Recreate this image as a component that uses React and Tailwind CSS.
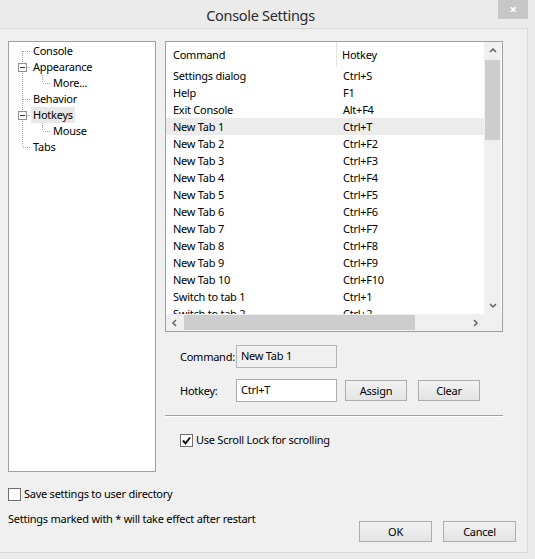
import React from "react";

const rows = [
  ["Settings dialog", "Ctrl+S"],
  ["Help", "F1"],
  ["Exit Console", "Alt+F4"],
  ["New Tab 1", "Ctrl+T"],
  ["New Tab 2", "Ctrl+F2"],
  ["New Tab 3", "Ctrl+F3"],
  ["New Tab 4", "Ctrl+F4"],
  ["New Tab 5", "Ctrl+F5"],
  ["New Tab 6", "Ctrl+F6"],
  ["New Tab 7", "Ctrl+F7"],
  ["New Tab 8", "Ctrl+F8"],
  ["New Tab 9", "Ctrl+F9"],
  ["New Tab 10", "Ctrl+F10"],
  ["Switch to tab 1", "Ctrl+1"],
  ["Switch to tab 2", "Ctrl+2"],
];

const DOT = "#a0a0a0";

function Gutter({ level, kind, box }) {
  const w = level === 0 ? 22 : 42;
  return (
    <svg width={w} height="16" className="shrink-0" shapeRendering="crispEdges">
      {level === 0 && (
        <>
          {kind === "first" && <line x1="13.5" y1="8" x2="13.5" y2="16" stroke={DOT} strokeDasharray="1 1" />}
          {kind === "mid" && <line x1="13.5" y1="0" x2="13.5" y2="16" stroke={DOT} strokeDasharray="1 1" />}
          {kind === "last" && <line x1="13.5" y1="0" x2="13.5" y2="8" stroke={DOT} strokeDasharray="1 1" />}
          <line x1={box ? 18 : 14} y1="8.5" x2="22" y2="8.5" stroke={DOT} strokeDasharray="1 1" />
          {box && (
            <>
              <rect x="9.5" y="4.5" width="8" height="8" fill="#fff" stroke="#919191" />
              <line x1="11" y1="8.5" x2="16" y2="8.5" stroke="#333" />
            </>
          )}
        </>
      )}
      {level === 1 && (
        <>
          <line x1="13.5" y1="0" x2="13.5" y2="16" stroke={DOT} strokeDasharray="1 1" />
          <line x1="33.5" y1="0" x2="33.5" y2="8" stroke={DOT} strokeDasharray="1 1" />
          <line x1="34" y1="8.5" x2="41" y2="8.5" stroke={DOT} strokeDasharray="1 1" />
        </>
      )}
    </svg>
  );
}

function TreeRow({ level, kind, box, label, selected }) {
  return (
    <div className="flex h-[16px] items-center">
      <Gutter level={level} kind={kind} box={box} />
      <span className={"px-[2px] leading-[16px] " + (selected ? "bg-[#e8e8e8]" : "")}>{label}</span>
    </div>
  );
}

function Check({ checked }) {
  return (
    <svg width="13" height="13" className="shrink-0" shapeRendering="crispEdges">
      <rect x="0.5" y="0.5" width="12" height="12" fill="#fff" stroke="#707070" />
      {checked && (
        <path d="M3 6.5 L5.5 9.5 L10 3.5" fill="none" stroke="#111" strokeWidth="2" shapeRendering="geometricPrecision" />
      )}
    </svg>
  );
}

function Btn({ children, className = "" }) {
  return (
    <div
      className={
        "flex items-center justify-center border border-[#acacac] bg-gradient-to-b from-[#f2f2f2] to-[#e4e4e4] " +
        className
      }
    >
      {children}
    </div>
  );
}

function Chevron({ dir }) {
  const paths = {
    up: "M1 5 L4 2 L7 5",
    down: "M1 2 L4 5 L7 2",
    left: "M5 1 L2 4 L5 7",
    right: "M2 1 L5 4 L2 7",
  };
  return (
    <svg width="8" height="8">
      <path d={paths[dir]} fill="none" stroke="#606060" strokeWidth="1.5" />
    </svg>
  );
}

export default function App() {
  return (
    <div
      className="w-[535px] h-[559px] bg-[#ebebeb] text-[11px] leading-[16px] tracking-[-0.25px] text-black overflow-hidden"
      style={{ fontFamily: '"Noto Sans", "Open Sans", sans-serif' }}
    >
      {/* Title bar */}
      <div className="relative flex h-[28px] items-center justify-center">
        <span className="text-[14.5px] tracking-[-0.3px] text-[#2b2b2b] mt-[1px] ml-[-14px]">Console Settings</span>
        <div className="absolute right-[7px] top-0 flex h-[19px] w-[30px] items-center justify-center bg-[#c7c7c7] text-white text-[13px] font-bold leading-none">
          ×
        </div>
      </div>

      {/* Client area */}
      <div className="w-[528px] h-[525px] bg-[#f0f0f0] border-t border-r border-b border-[#d8d8d8] flex flex-col">
        <div className="flex items-start pt-[12px] pl-[8px]">
          {/* Tree */}
          <div className="w-[148px] h-[431px] shrink-0 border border-[#a0a0a0] bg-white pt-[1px]">
            <TreeRow level={0} kind="first" label="Console" />
            <TreeRow level={0} kind="mid" box label="Appearance" />
            <TreeRow level={1} label="More..." />
            <TreeRow level={0} kind="mid" label="Behavior" />
            <TreeRow level={0} kind="mid" box label="Hotkeys" selected />
            <TreeRow level={1} label="Mouse" />
            <TreeRow level={0} kind="last" label="Tabs" />
          </div>

          {/* Right column */}
          <div className="ml-[9px] w-[338px] flex flex-col">
            {/* List view */}
            <div className="h-[291px] border border-[#a0a0a0] bg-white flex flex-col">
              <div className="flex flex-1 min-h-0">
                <div className="flex-1 overflow-hidden">
                  <div className="flex h-[25px] items-center">
                    <div className="w-[171px] pl-[7px] h-full flex items-center border-r border-[#e5e5e5]">Command</div>
                    <div className="pl-[5px]">Hotkey</div>
                  </div>
                  {rows.map(([c, h], i) => (
                    <div key={i} className={"flex h-[17px] items-center " + (i === 3 ? "bg-[#ececec]" : "")}>
                      <div className="w-[171px] pl-[7px]">{c}</div>
                      <div className="pl-[6px]">{h}</div>
                    </div>
                  ))}
                </div>
                {/* vertical scrollbar */}
                <div className="w-[17px] mr-[1px] bg-[#f0f0f0] flex flex-col">
                  <div className="h-[17px] flex items-center justify-center"><Chevron dir="up" /></div>
                  <div className="flex-1 flex flex-col">
                    <div className="mt-[1px] h-[80px] mx-[1px] bg-[#cdcdcd]" />
                  </div>
                  <div className="h-[17px] flex items-center justify-center"><Chevron dir="down" /></div>
                </div>
              </div>
              {/* horizontal scrollbar */}
              <div className="h-[17px] flex bg-[#f0f0f0]">
                <div className="w-[17px] flex items-center justify-center"><Chevron dir="left" /></div>
                <div className="flex-1 flex items-stretch py-[1px]">
                  <div className="w-[231px] bg-[#cdcdcd] ml-[1px]" />
                </div>
                <div className="w-[17px] flex items-center justify-center"><Chevron dir="right" /></div>
                <div className="w-[18px] bg-[#f0f0f0]" />
              </div>
            </div>

            {/* Command field */}
            <div className="mt-[13px] flex items-center pl-[15px]">
              <span className="w-[56px]">Command:</span>
              <div className="w-[101px] h-[23px] border border-[#b4b4b4] bg-[#f0f0f0] pl-[4px] pt-[2px]">New Tab 1</div>
            </div>

            {/* Hotkey field */}
            <div className="mt-[11px] flex items-center pl-[15px]">
              <span className="w-[56px]">Hotkey:</span>
              <div className="w-[101px] h-[23px] border border-[#abadb3] bg-white pl-[4px] pt-[2px]">Ctrl+T</div>
              <Btn className="ml-[8px] w-[62px] h-[21px]">Assign</Btn>
              <Btn className="ml-[11px] w-[62px] h-[21px]">Clear</Btn>
            </div>

            {/* separator */}
            <div className="mt-[13px] h-[2px] border-t border-[#a0a0a0] border-b border-b-white w-[338px]" />

            {/* scroll lock */}
            <div className="mt-[15px] flex items-center pl-[15px]">
              <Check checked />
              <span className="ml-[3px]">Use Scroll Lock for scrolling</span>
            </div>
          </div>
        </div>

        {/* Save settings */}
        <div className="mt-[14px] pl-[8px] flex items-center h-[16px]">
          <Check />
          <span className="ml-[3px]">Save settings to user directory</span>
        </div>

        <div className="mt-[9px] flex items-start justify-between pl-[8px] pr-[11px]">
          <span>Settings marked with * will take effect after restart</span>
          <div className="flex mt-[10px]">
            <Btn className="w-[73px] h-[21px]">OK</Btn>
            <Btn className="ml-[11px] w-[73px] h-[21px]">Cancel</Btn>
          </div>
        </div>
      </div>
    </div>
  );
}
